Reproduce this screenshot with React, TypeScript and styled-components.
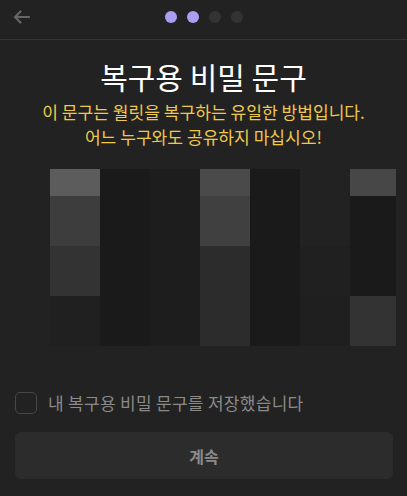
import React, { FC } from 'react';
import styled, { createGlobalStyle } from 'styled-components';

const GlobalStyle = createGlobalStyle`
	html, body {
		margin: 0;
		padding: 0;
		background: #222222;
	}
	body {
		font-family: 'Noto Sans CJK KR', 'Noto Sans', sans-serif;
	}
`;

// blurred preview of the phrase, column by column
const CELLS: string[][] = [
	['#5c5c5c', '#3d3d3d', '#333333', '#202020'],
	['#1a1a1a', '#1a1a1a', '#1a1a1a', '#1a1a1a'],
	['#1d1d1d', '#1d1d1d', '#1d1d1d', '#1d1d1d'],
	['#4a4a4a', '#404040', '#2c2c2c', '#2c2c2c'],
	['#1a1a1a', '#1a1a1a', '#1a1a1a', '#1a1a1a'],
	['#222222', '#222222', '#202020', '#1f1f1f'],
	['#474747', '#1a1a1a', '#1a1a1a', '#333333'],
];

const STEPS = [true, true, false, false];

const App: FC = () => {
	return (
		<>
			<GlobalStyle />
			<Screen>
				<Header>
					<BackButton aria-label="back">
						<svg width="17" height="14" viewBox="0 0 17 14" fill="none">
							<path
								d="M16 7H2M7.5 1.5L2 7l5.5 5.5"
								stroke="#666"
								strokeWidth="2.2"
								strokeLinecap="round"
								strokeLinejoin="round"
							/>
						</svg>
					</BackButton>
					<Steps>
						{STEPS.map((active, i) => (
							<Dot key={i} $active={active} />
						))}
					</Steps>
				</Header>
				<Body>
					<Title>복구용 비밀 문구</Title>
					<Warning>
						이 문구는 월릿을 복구하는 유일한 방법입니다.
						<br />
						어느 누구와도 공유하지 마십시오!
					</Warning>
					<PhraseWrap>
						<PhraseGrid>
							{CELLS.map((col, c) =>
								col.map((color, r) => (
									<Cell key={`${c}-${r}`} $color={color} $col={c + 1} $row={r + 1} />
								))
							)}
						</PhraseGrid>
					</PhraseWrap>
				</Body>
				<Footer>
					<CheckRow>
						<CheckBox type="checkbox" />
						<CheckLabel>내 복구용 비밀 문구를 저장했습니다</CheckLabel>
					</CheckRow>
					<ContinueButton disabled>계속</ContinueButton>
				</Footer>
			</Screen>
		</>
	);
};

const Screen = styled.div`
	width: 407px;
	height: 496px;
	display: flex;
	flex-direction: column;
	background: #222222;
	overflow: hidden;
`;

const Header = styled.div`
	position: relative;
	height: 40px;
	flex-shrink: 0;
	display: flex;
	align-items: center;
	justify-content: center;
	border-bottom: 1px solid #353535;
	box-sizing: border-box;
`;

const BackButton = styled.button`
	position: absolute;
	left: 13px;
	top: 10px;
	padding: 0;
	border: none;
	background: none;
	display: flex;
	cursor: pointer;
`;

const Steps = styled.div`
	display: flex;
	gap: 10px;
	margin-top: -6px;
	margin-left: 1px;
`;

const Dot = styled.span<{ $active: boolean }>`
	width: 12px;
	height: 12px;
	border-radius: 50%;
	background: ${(p) => (p.$active ? '#a99ff0' : '#333333')};
`;

const Body = styled.div`
	flex: 1;
	display: flex;
	flex-direction: column;
	align-items: center;
`;

const Title = styled.h1`
	margin: 16px 0 0;
	font-size: 30px;
	font-weight: 400;
	line-height: 40px;
	color: #ffffff;
	text-align: center;
`;

const Warning = styled.p`
	margin: 3px 0 0;
	font-size: 17.1px;
	line-height: 25px;
	color: #f0c94a;
	text-align: center;
	white-space: nowrap;
`;

const PhraseWrap = styled.div`
	align-self: stretch;
	padding: 20px 11px 0 50px;
`;

const PhraseGrid = styled.div`
	display: grid;
	grid-template-columns: repeat(6, 50px) 46px;
	grid-template-rows: 27px repeat(3, 50px);
`;

const Cell = styled.div<{ $color: string; $col: number; $row: number }>`
	grid-column: ${(p) => p.$col};
	grid-row: ${(p) => p.$row};
	background: ${(p) => p.$color};
`;

const Footer = styled.div`
	flex-shrink: 0;
	padding: 0 14px 17px 15px;
	display: flex;
	flex-direction: column;
	gap: 17px;
`;

const CheckRow = styled.label`
	display: flex;
	align-items: center;
	gap: 11px;
	cursor: pointer;
`;

const CheckBox = styled.input`
	appearance: none;
	margin: 0;
	width: 22px;
	height: 22px;
	border: 1px solid #474747;
	border-radius: 5px;
	background: transparent;
	box-sizing: border-box;
`;

const CheckLabel = styled.span`
	font-size: 17px;
	color: #8a8a8a;
	letter-spacing: 0.3px;
`;

const ContinueButton = styled.button`
	height: 47px;
	border: none;
	border-radius: 6px;
	background: #2c2c2c;
	color: #8a8a8a;
	font-family: inherit;
	font-size: 16px;
	font-weight: 700;
`;

export default App;
